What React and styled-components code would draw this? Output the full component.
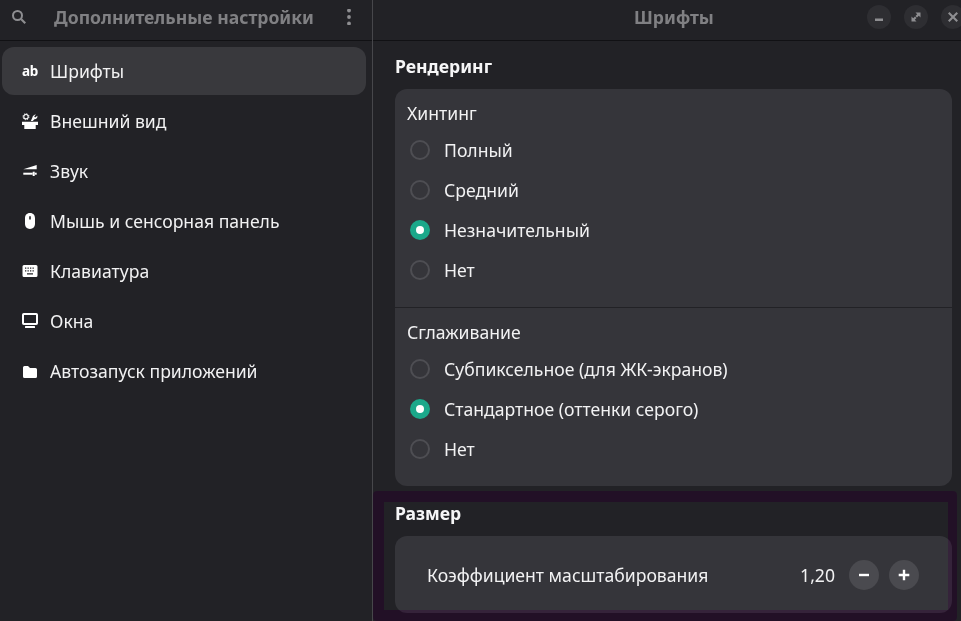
import React from 'react'
import styled, { createGlobalStyle } from 'styled-components'

const Global = createGlobalStyle`
  html, body { margin: 0; padding: 0; height: 100%; overflow: hidden; background: #222226; }
  body { font-family: "Noto Sans", sans-serif; color: #f2f2f3; }
`

const Win = styled.div`
  position: relative;
  width: 973px;
  height: 621px;
  display: flex;
  overflow: hidden;
  background: #222226;
`
const Side = styled.aside`
  width: 372px;
  flex: none;
  border-right: 1px solid #47474b;
`
const Main = styled.main`
  flex: 1;
  min-width: 0;
`
const Header = styled.header`
  height: 41px;
  box-sizing: border-box;
  display: flex;
  align-items: center;
  border-bottom: 1px solid #111114;
  padding: ${({ $main }) => ($main ? '0 8px 6px 108px' : '0 15px 6px 11px')};
`
const Title = styled.h1`
  margin: 0;
  flex: 1;
  text-align: center;
  font-size: 17.6px;
  font-weight: 700;
  color: #808083;
  line-height: 34px;
`
const SideNav = styled.nav`
  display: flex;
  flex-direction: column;
  gap: 2px;
  padding: 6px 6px 0 2px;
`
const NavRow = styled.div`
  height: 48px;
  display: flex;
  align-items: center;
  gap: 12px;
  padding-left: 20px;
  border-radius: 12px;
  font-size: 17.6px;
  background: ${({ $active }) => ($active ? '#39393d' : 'transparent')};
`
const NavIcon = styled.span`
  width: 16px;
  height: 16px;
  display: flex;
  align-items: center;
  justify-content: center;
  color: ${({ $dim }) => ($dim ? '#8e8e91' : '#fff')};
`
const AbGlyph = styled.span`
  font-size: 13.5px;
  font-weight: 700;
  letter-spacing: -0.4px;
`
const Controls = styled.div`
  display: flex;
  gap: 13px;
`
const WinBtn = styled.span`
  width: 24px;
  height: 24px;
  border-radius: 50%;
  background: #2e2e32;
  display: flex;
  align-items: center;
  justify-content: center;
  color: #8e8e91;
`
const Content = styled.div`
  padding: 12px 21px 0 22px;
`
const SectionTitle = styled.h2`
  margin: 0;
  font-size: 17.6px;
  font-weight: 700;
  line-height: 26px;
  color: #f6f6f7;
`
const Card = styled.section`
  background: #35353a;
  border-radius: 12px;
`
const RenderCard = styled(Card)`
  margin-top: 10px;
  height: 397px;
  margin-bottom: 14px;
`
const Group = styled.div`
  padding: 11px 12px 0;
  height: ${({ $h }) => $h}px;
  box-sizing: border-box;
  & + & {
    border-top: 1px solid #222226;
  }
`
const GroupTitle = styled.div`
  font-size: 17.6px;
  line-height: 26px;
  margin-bottom: 4px;
`
const RadioRow = styled.div`
  height: 40px;
  display: flex;
  align-items: center;
  gap: 14px;
  padding-left: 3px;
  font-size: 17.6px;
`
const Radio = styled.span`
  width: 20px;
  height: 20px;
  box-sizing: border-box;
  border-radius: 50%;
  border: ${({ $on }) => ($on ? 'none' : '2px solid #4e4e53')};
  background: ${({ $on }) => ($on ? '#1ba88a' : 'transparent')};
  display: flex;
  align-items: center;
  justify-content: center;
  &::after {
    content: '';
    display: ${({ $on }) => ($on ? 'block' : 'none')};
    width: 8px;
    height: 8px;
    border-radius: 50%;
    background: #fff;
  }
`
const SizeCard = styled(Card)`
  margin-top: 10px;
  height: 77px;
  display: flex;
  align-items: center;
  padding: 0 33px 0 32px;
  font-size: 17.6px;
`
const SizeLabel = styled.span`
  flex: 1;
`
const SizeValue = styled.span`
  margin-right: 14px;
`
const Stepper = styled.div`
  display: flex;
  gap: 10px;
`
const RoundBtn = styled.span`
  width: 30px;
  height: 30px;
  border-radius: 50%;
  background: #4a4a4f;
  display: flex;
  align-items: center;
  justify-content: center;
  color: #fff;
`
// purple tint frame laid over the lower part of the page
const Highlight = styled.div`
  position: absolute;
  left: 373px;
  top: 491px;
  width: 584px;
  height: 130px;
  box-sizing: border-box;
  border: 11px solid rgb(0, 18, 0);
  border-right-width: 9px;
  border-radius: 4px;
  mix-blend-mode: difference;
  pointer-events: none;
`

const Fill = ({ children }) => (
  <svg width="16" height="16" viewBox="0 0 16 16" fill="currentColor">{children}</svg>
)

const icons = {
  font: <AbGlyph>ab</AbGlyph>,
  look: (
    <Fill>
      <circle cx="4" cy="3.700" r="2.200" fill="none" stroke="currentColor" strokeWidth="1.100" />
      <circle cx="4" cy="3.700" r="3" fill="none" stroke="currentColor" strokeWidth="1" strokeDasharray="1.200 1.150" />
      <path d="M14 1.600l-1.800 1.700.9 1.100 2.300-1.700c.3 2-.8 3.500-3 3.500L10.800 8H8.800l1.500-3.200c.2-1.600 1.800-3 3.700-3.200z" />
      <path d="M0 8.800h16v3.100h-2.300V16H2.300v-4.100H0z" />
    </Fill>
  ),
  sound: (
    <Fill>
      <path d="M1.300 6.300L14.700 2v4.300z" />
      <rect x="1.300" y="9.700" width="9.400" height="2" />
      <rect x="10.700" y="8.700" width="2" height="4.300" />
      <rect x="12.700" y="9.700" width="2" height="2" />
    </Fill>
  ),
  mouse: (
    <Fill>
      <path fillRule="evenodd" d="M8 0c3.400 0 5 2.300 5 5.200v5.600c0 2.900-1.900 5.200-5 5.200s-5-2.300-5-5.200V5.200C3 2.300 4.600 0 8 0zM7.200 3.200v3.300h1.600V3.200z" />
    </Fill>
  ),
  keyboard: (
    <Fill>
      <path fillRule="evenodd" d="M2 2h12a1.500 1.500 0 0 1 1.500 1.500v9A1.500 1.500 0 0 1 14 14H2A1.500 1.500 0 0 1 .5 12.500v-9A1.500 1.500 0 0 1 2 2zm1 2.500v1.300h1.300V4.500zm2.500 0v1.300h1.300V4.500zm2.500 0v1.300h1.300V4.500zm2.500 0v1.300h1.300V4.500zM3 7.300v1.300h1.300V7.300zm2.500 0v1.300h1.300V7.300zm2.500 0v1.300h1.300V7.300zm2.500 0v1.300h1.300V7.300zM5 10.200v1.300h6v-1.300z" />
    </Fill>
  ),
  window: (
    <Fill>
      <path fillRule="evenodd" d="M1.800 0h12.400A1.800 1.800 0 0 1 16 1.800v8.400a1.800 1.800 0 0 1-1.800 1.800H1.800A1.800 1.800 0 0 1 0 10.200V1.800A1.800 1.800 0 0 1 1.800 0zM2 2v8h12V2z" />
      <rect x="3" y="13" width="10" height="2" rx=".5" />
    </Fill>
  ),
  folder: (
    <Fill>
      <path d="M1 4.500A1.500 1.500 0 0 1 2.500 3H6l2 2h5.500A1.500 1.500 0 0 1 15 6.500v7a1.500 1.500 0 0 1-1.500 1.500h-11A1.500 1.500 0 0 1 1 13.500z" />
    </Fill>
  ),
}

const navItems = [
  { label: 'Шрифты', icon: 'font', active: true },
  { label: 'Внешний вид', icon: 'look' },
  { label: 'Звук', icon: 'sound' },
  { label: 'Мышь и сенсорная панель', icon: 'mouse' },
  { label: 'Клавиатура', icon: 'keyboard' },
  { label: 'Окна', icon: 'window' },
  { label: 'Автозапуск приложений', icon: 'folder' },
]
const hinting = [['Полный'], ['Средний'], ['Незначительный', true], ['Нет']]
const smoothing = [['Субпиксельное (для ЖК-экранов)'], ['Стандартное (оттенки серого)', true], ['Нет']]

const Options = ({ items }) =>
  items.map(([label, on]) => (
    <RadioRow key={label}>
      <Radio $on={on} />
      {label}
    </RadioRow>
  ))

export default function App() {
  return (
    <Win>
      <Global />
      <Side>
        <Header>
          <NavIcon $dim>
            <Fill>
              <circle cx="6.500" cy="6.500" r="4.500" fill="none" stroke="currentColor" strokeWidth="2" />
              <path d="M9.500 11l1.500-1.500 4 4-1.500 1.500z" />
            </Fill>
          </NavIcon>
          <Title>Дополнительные настройки</Title>
          <NavIcon $dim>
            <Fill>
              <circle cx="8" cy="1.500" r="1.900" />
              <circle cx="8" cy="8" r="1.900" />
              <circle cx="8" cy="14.500" r="1.900" />
            </Fill>
          </NavIcon>
        </Header>
        <SideNav>
          {navItems.map((item) => (
            <NavRow key={item.label} $active={item.active}>
              <NavIcon>{icons[item.icon]}</NavIcon>
              {item.label}
            </NavRow>
          ))}
        </SideNav>
      </Side>
      <Main>
        <Header $main>
          <Title>Шрифты</Title>
          <Controls>
            <WinBtn>
              <Fill><rect x="4" y="9.500" width="8" height="2.500" /></Fill>
            </WinBtn>
            <WinBtn>
              <Fill>
                <path d="M7.500 3.500h5v5L10.800 6.800 9 8.500 7.500 7l1.700-1.800z" />
                <path d="M8.500 12.500h-5v-5l1.700 1.700L7 7.500 8.500 9l-1.700 1.800z" />
              </Fill>
            </WinBtn>
            <WinBtn>
              <Fill><path d="M4.500 3L8 6.500 11.500 3 13 4.500 9.500 8l3.500 3.500-1.500 1.500L8 9.500 4.500 13 3 11.500 6.500 8 3 4.500z" /></Fill>
            </WinBtn>
          </Controls>
        </Header>
        <Content>
          <SectionTitle>Рендеринг</SectionTitle>
          <RenderCard>
            <Group $h={218}>
              <GroupTitle>Хинтинг</GroupTitle>
              <Options items={hinting} />
            </Group>
            <Group $h={179}>
              <GroupTitle>Сглаживание</GroupTitle>
              <Options items={smoothing} />
            </Group>
          </RenderCard>
          <SectionTitle>Размер</SectionTitle>
          <SizeCard>
            <SizeLabel>Коэффициент масштабирования</SizeLabel>
            <SizeValue>1,20</SizeValue>
            <Stepper>
              <RoundBtn>
                <Fill><rect x="3" y="6.800" width="10" height="2.400" /></Fill>
              </RoundBtn>
              <RoundBtn>
                <Fill><path d="M6.800 2.700h2.400v4.100h4.100v2.400H9.200v4.100H6.800V9.200H2.700V6.800h4.100z" /></Fill>
              </RoundBtn>
            </Stepper>
          </SizeCard>
        </Content>
      </Main>
      <Highlight />
    </Win>
  )
}
